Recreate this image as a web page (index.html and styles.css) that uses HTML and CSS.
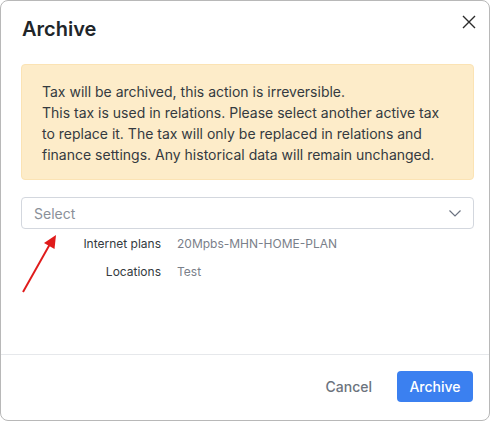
FILE: index.html
```html
<!DOCTYPE html>
<html lang="en">
<head>
<meta charset="utf-8">
<title>Archive</title>
<link rel="stylesheet" href="styles.css">
</head>
<body>
<div class="dialog">
  <div class="header">
    <h1 class="title">Archive</h1>
    <button class="close" aria-label="Close">
      <svg width="14" height="14" viewBox="0 0 14 14"><path d="M1 1 L13 13 M13 1 L1 13" stroke="#2b2b2b" stroke-width="1.4" fill="none"/></svg>
    </button>
  </div>
  <div class="body">
    <div class="alert">
      Tax will be archived, this action is irreversible.<br>
      This tax is used in relations. Please select another active tax to replace it. The tax will only be replaced in relations and finance settings. Any historical data will remain unchanged.
    </div>
    <div class="select">
      <span class="placeholder">Select</span>
      <svg class="chev" width="12" height="7" viewBox="0 0 12 7"><path d="M0.5 0.5 L6 6 L11.5 0.5" stroke="#6b7280" stroke-width="1.2" fill="none"/></svg>
    </div>
    <div class="rows">
      <div class="row"><span class="label">Internet plans</span><span class="value">20Mpbs-MHN-HOME-PLAN</span></div>
      <div class="row"><span class="label">Locations</span><span class="value">Test</span></div>
    </div>
    <svg class="arrow" width="60" height="70" viewBox="0 0 60 70">
      <line x1="22" y1="62" x2="49" y2="14" stroke="#e01b1b" stroke-width="2"/>
      <polygon points="55,5 53.5,19 43,13" fill="#e01b1b"/>
    </svg>
  </div>
  <div class="footer">
    <button class="cancel">Cancel</button>
    <button class="primary">Archive</button>
  </div>
</div>
</body>
</html>
```

FILE: styles.css
```css
html, body {
  margin: 0;
  padding: 0;
  background: #ffffff;
}
body {
  font-family: Inter, "Noto Sans", sans-serif;
  color: #333333;
}
.dialog {
  box-sizing: border-box;
  width: 490px;
  height: 421px;
  border: 1px solid #b8b8b8;
  border-radius: 8px;
  display: flex;
  flex-direction: column;
  background: #fff;
  position: relative;
}
.header {
  display: flex;
  justify-content: space-between;
  align-items: flex-start;
  padding: 16px 8px 0 21px;
}
.title {
  margin: 0;
  font-size: 20px;
  line-height: 24px;
  font-weight: 600;
  color: #212529;
}
.close {
  width: 24px;
  height: 24px;
  margin-top: -7px;
  padding: 0;
  border: none;
  background: transparent;
  display: flex;
  align-items: center;
  justify-content: center;
}
.body {
  flex: 1;
  padding: 23px 15px 0 20px;
  position: relative;
}
.alert {
  background: #fdecc9;
  border: 1px solid #fbe3b4;
  border-radius: 4px;
  padding: 16px 20px 14px 20px;
  font-size: 14px;
  line-height: 21px;
  color: #343a40;
}
.select {
  box-sizing: border-box;
  margin-top: 17px;
  height: 32px;
  border: 1px solid #d3d7de;
  border-radius: 4px;
  display: flex;
  align-items: center;
  justify-content: space-between;
  padding: 0 12px 0 12px;
}
.placeholder {
  font-size: 14px;
  color: #8a9099;
}
.chev {
  margin-top: 1px;
}
.rows {
  margin-top: 5px;
  display: flex;
  flex-direction: column;
  gap: 8px;
}
.row {
  display: grid;
  grid-template-columns: 140px 1fr;
  column-gap: 16px;
  font-size: 12px;
  line-height: 20px;
}
.label {
  text-align: right;
  color: #343a40;
}
.value {
  color: #7a808a;
}
.arrow {
  position: absolute;
  left: 0;
  top: 189px;
}
.footer {
  box-sizing: border-box;
  height: 66px;
  border-top: 1px solid #e6e8eb;
  display: flex;
  justify-content: flex-end;
  align-items: flex-start;
  gap: 25px;
  padding: 16px 16px 0 0;
}
.footer button {
  font-family: Inter, "Noto Sans", sans-serif;
  font-size: 14px;
  font-weight: 500;
  height: 31px;
  border: none;
  cursor: pointer;
}
.cancel {
  background: transparent;
  color: #6c737d;
  padding: 0;
}
.primary {
  width: 76px;
  background: #3b80f0;
  color: #ffffff;
  border-radius: 4px;
  padding: 0;
}
```
